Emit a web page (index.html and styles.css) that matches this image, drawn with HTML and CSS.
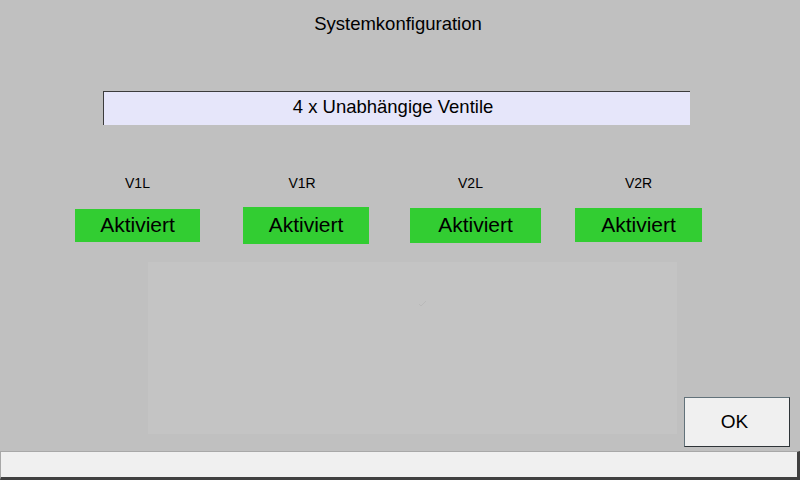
FILE: index.html
```html
<!DOCTYPE html>
<html lang="de">
<head>
<meta charset="utf-8">
<title>Systemkonfiguration</title>
<link rel="stylesheet" href="styles.css">
</head>
<body>
<div class="screen">
  <header class="title">Systemkonfiguration</header>
  <div class="mode">4 x Unabhängige Ventile</div>
  <div class="valves">
    <div class="valve valve-1">
      <div class="valve-label">V1L</div>
      <div class="valve-btn">Aktiviert</div>
    </div>
    <div class="valve valve-2">
      <div class="valve-label">V1R</div>
      <div class="valve-btn">Aktiviert</div>
    </div>
    <div class="valve valve-3">
      <div class="valve-label">V2L</div>
      <div class="valve-btn">Aktiviert</div>
    </div>
    <div class="valve valve-4">
      <div class="valve-label">V2R</div>
      <div class="valve-btn">Aktiviert</div>
    </div>
  </div>
  <div class="middle">
    <div class="panel">
      <svg class="mark" width="10" height="8" viewBox="0 0 10 8"><path d="M1 4 L3 6 L8 1" fill="none" stroke="#b9b9b9" stroke-width="1"/></svg>
    </div>
    <div class="ok-btn">OK</div>
  </div>
  <div class="status-bar"></div>
</div>
</body>
</html>
```

FILE: styles.css
```css
html, body {
  margin: 0;
  padding: 0;
  background: #c0c0c0;
}

.screen {
  width: 800px;
  height: 480px;
  display: flex;
  flex-direction: column;
  font-family: "Liberation Sans", Arial, sans-serif;
  color: #000;
  overflow: hidden;
}

.title {
  height: 48px;
  line-height: 48px;
  text-align: center;
  font-size: 18.5px;
  padding-right: 4px;
}

.mode {
  margin-top: 43px;
  margin-left: 103px;
  width: 587px;
  height: 34px;
  box-sizing: border-box;
  line-height: 29px;
  border-top: 1px solid #3c3c3c;
  border-left: 1px solid #3c3c3c;
  background: #e6e6fa;
  text-align: center;
  font-size: 18.5px;
  padding-right: 8px;
}

.valves {
  margin-top: 50px;
  padding-left: 75px;
  display: flex;
  align-items: flex-start;
}

.valve {
  display: flex;
  flex-direction: column;
}

.valve-label {
  height: 16px;
  line-height: 16px;
  font-size: 14px;
  text-align: center;
  margin-bottom: 16px;
}

.valve-btn {
  background: #32cd32;
  font-size: 21px;
  display: flex;
  align-items: center;
  justify-content: center;
  padding-bottom: 1px;
  box-sizing: border-box;
}

.valve-1 { width: 125px; }
.valve-1 .valve-btn { height: 33px; margin-top: 2px; }

.valve-2 { width: 126px; margin-left: 43px; }
.valve-2 .valve-label { padding-right: 8px; }
.valve-2 .valve-btn { height: 37px; }

.valve-3 { width: 131px; margin-left: 41px; }
.valve-3 .valve-label { padding-right: 10px; }
.valve-3 .valve-btn { height: 35px; margin-top: 1px; }

.valve-4 { width: 127px; margin-left: 34px; }
.valve-4 .valve-btn { height: 34px; margin-top: 1px; }

.middle {
  margin-top: 18px;
  height: 185px;
  padding-left: 148px;
  display: flex;
  align-items: flex-start;
  gap: 7px;
}

.panel {
  width: 529px;
  height: 172px;
  background: #c4c4c4;
  box-sizing: border-box;
  padding-top: 38px;
  padding-left: 270px;
}

.mark {
  display: block;
}

.ok-btn {
  align-self: flex-end;
  width: 106px;
  height: 50px;
  box-sizing: border-box;
  background: #f0f0f0;
  border: 1px solid #62727a;
  border-right-color: #2e3438;
  border-bottom-color: #2e3438;
  font-size: 19px;
  padding-right: 5px;
  display: flex;
  align-items: center;
  justify-content: center;
}

.status-bar {
  margin-top: 4px;
  height: 29px;
  box-sizing: border-box;
  background: #f0f0f0;
  border-top: 1px solid #a8a8a8;
  border-left: 1px solid #a8a8a8;
  border-right: 3px solid #404040;
  border-bottom: 3px solid #404040;
}
```
